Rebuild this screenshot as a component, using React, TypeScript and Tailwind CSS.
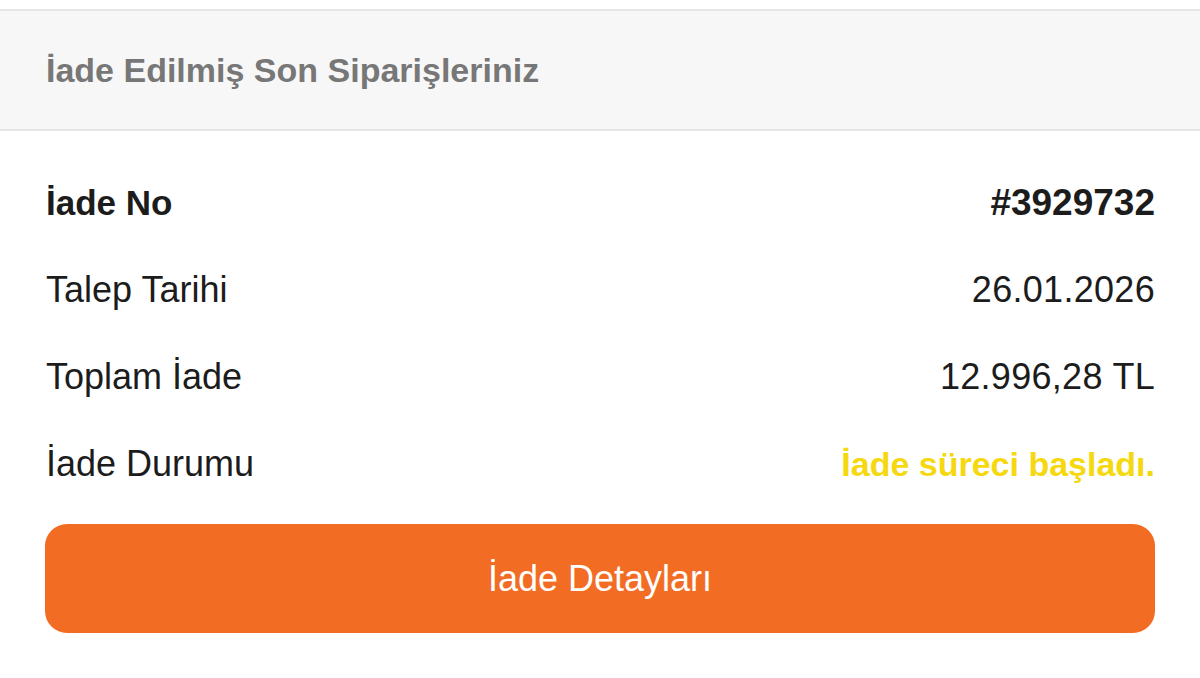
import React from "react";

export default function App() {
  const rows = [
    { label: "Talep Tarihi", value: "26.01.2026" },
    { label: "Toplam İade", value: "12.996,28 TL" },
  ];
  return (
    <div className="w-[1200px] h-[678px] bg-white overflow-hidden" style={{ fontFamily: '"Liberation Sans", Arial, sans-serif' }}>
      <div className="h-[9px] bg-white" />
      <div className="h-[122px] bg-[#f7f7f7] border-y-2 border-[#e6e6e6] flex items-center px-[46px]">
        <span className="text-[34px] font-bold text-[#777777]">İade Edilmiş Son Siparişleriniz</span>
      </div>
      <div className="px-[45px] pt-[42px]">
        <div className="flex flex-col text-[#1c1c1c]">
          <div className="h-[60px] flex items-center justify-between pl-[1px]">
            <span className="text-[35px] font-bold">İade No</span>
            <span className="text-[37px] font-bold">#3929732</span>
          </div>
          {rows.map((r) => (
            <div key={r.label} className="h-[60px] mt-[27px] flex items-center justify-between pl-[1px]">
              <span className="text-[36px]">{r.label}</span>
              <span className="text-[36px] tracking-[0.3px]">{r.value}</span>
            </div>
          ))}
          <div className="h-[60px] mt-[27px] flex items-center justify-between pl-[1px]">
            <span className="text-[36px]">İade Durumu</span>
            <span className="text-[34px] font-bold text-[#f6d80f]">İade süreci başladı.</span>
          </div>
        </div>
        <button className="mt-[30px] w-full h-[109px] rounded-[22px] bg-[#f36c24] text-white text-[36px] flex items-center justify-center">
          İade Detayları
        </button>
      </div>
    </div>
  );
}
